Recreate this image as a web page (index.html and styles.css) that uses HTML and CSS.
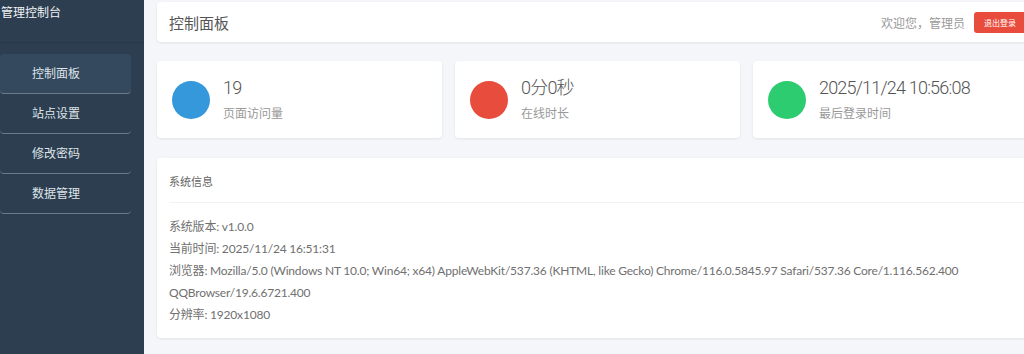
FILE: index.html
```html
<!DOCTYPE html>
<html lang="zh-CN">
<head>
    <meta charset="UTF-8">
    <title>管理控制台</title>
    <link rel="stylesheet" href="styles.css">
</head>
<body>
<div class="layout">
    <div class="sidebar">
        <div class="sidebar-title">管理控制台</div>
        <ul class="menu">
            <li class="menu-item active">控制面板</li>
            <li class="menu-item">站点设置</li>
            <li class="menu-item">修改密码</li>
            <li class="menu-item">数据管理</li>
        </ul>
    </div>
    <div class="main">
        <div class="header">
            <h1>控制面板</h1>
            <div class="user-info">
                <span>欢迎您，管理员</span>
                <button class="logout">退出登录</button>
            </div>
        </div>
        <div class="stats">
            <div class="stat-card">
                <div class="stat-icon blue"></div>
                <div class="stat-text">
                    <div class="stat-value">19</div>
                    <div class="stat-label">页面访问量</div>
                </div>
            </div>
            <div class="stat-card">
                <div class="stat-icon red"></div>
                <div class="stat-text">
                    <div class="stat-value">0分0秒</div>
                    <div class="stat-label">在线时长</div>
                </div>
            </div>
            <div class="stat-card">
                <div class="stat-icon green"></div>
                <div class="stat-text">
                    <div class="stat-value">2025/11/24 10:56:08</div>
                    <div class="stat-label">最后登录时间</div>
                </div>
            </div>
        </div>
        <div class="info-card">
            <h3>系统信息</h3>
            <div class="info-body">
                <p>系统版本: v1.0.0</p>
                <p>当前时间: 2025/11/24 16:51:31</p>
                <p>浏览器: Mozilla/5.0 (Windows NT 10.0; Win64; x64) AppleWebKit/537.36 (KHTML, like Gecko) Chrome/116.0.5845.97 Safari/537.36 Core/1.116.562.400 QQBrowser/19.6.6721.400</p>
                <p>分辨率: 1920x1080</p>
            </div>
        </div>
    </div>
</div>
</body>
</html>
```

FILE: styles.css
```css
body {
    margin: 0;
    padding: 0;
    background-color: #f5f6fa;
    font-family: "Lato", "Noto Sans CJK SC", sans-serif;
    overflow: hidden;
}
.layout {
    display: flex;
    min-height: 354px;
}
.sidebar {
    width: 144px;
    flex-shrink: 0;
    background-color: #2c3e50;
    color: #ecf0f1;
}
.sidebar-title {
    height: 38px;
    padding: 4px 0 0 1px;
    font-size: 12px;
    line-height: 18px;
    color: #f2f4f6;
    border-bottom: 1px solid #283848;
}
.menu {
    list-style: none;
    margin: 11px 0 0;
    padding: 0;
    width: 131px;
}
.menu-item {
    height: 39px;
    line-height: 40px;
    padding-left: 32px;
    font-size: 12px;
    color: #dfe4e8;
    border-bottom: 1px solid #6c7a88;
    border-radius: 4px;
}
.menu-item.active {
    background-color: #34495e;
}
.main {
    width: 881px;
    flex-shrink: 0;
    padding-left: 13px;
}
.header {
    margin-top: 2px;
    height: 40px;
    padding: 0 12px;
    background-color: #fff;
    border-radius: 4px;
    box-shadow: 0 1px 3px rgba(0, 0, 0, 0.08);
    display: flex;
    align-items: center;
    justify-content: space-between;
}
.header h1 {
    margin: 0;
    font-size: 15px;
    font-weight: normal;
    color: #555;
}
.user-info {
    display: flex;
    align-items: center;
    font-size: 12px;
    color: #999;
}
.logout {
    margin-left: 9px;
    height: 21px;
    padding: 0 10px;
    border: none;
    border-radius: 3px;
    background-color: #e74c3c;
    color: #fff;
    font-family: inherit;
    font-size: 8px;
}
.stats {
    display: grid;
    grid-template-columns: repeat(3, 285px);
    gap: 13px;
    margin-top: 19px;
}
.stat-card {
    height: 77px;
    padding: 0 15px;
    background-color: #fff;
    border-radius: 4px;
    box-shadow: 0 1px 3px rgba(0, 0, 0, 0.08);
    display: flex;
    align-items: center;
}
.stat-icon {
    width: 38px;
    height: 38px;
    border-radius: 50%;
    margin-right: 13px;
    flex-shrink: 0;
}
.stat-icon.blue { background-color: #3498db; }
.stat-icon.red { background-color: #e74c3c; }
.stat-icon.green { background-color: #2ecc71; }
.stat-value {
    font-family: "Roboto", "Noto Sans CJK SC", sans-serif;
    font-size: 18px;
    font-weight: 300;
    letter-spacing: -0.8px;
    line-height: 22px;
    color: #555;
}
.stat-label {
    margin-top: 6px;
    font-size: 12px;
    line-height: 18px;
    color: #999;
}
.info-card {
    margin-top: 20px;
    padding: 0 12px 12px;
    background-color: #fff;
    border-radius: 4px;
    box-shadow: 0 1px 3px rgba(0, 0, 0, 0.08);
}
.info-card h3 {
    margin: 0;
    padding: 14px 0 10px;
    font-size: 11px;
    font-weight: normal;
    line-height: 20px;
    color: #666;
    border-bottom: 1px solid #f2f2f2;
}
.info-body {
    padding-top: 13px;
}
.info-body p {
    margin: 0;
    font-size: 12px;
    letter-spacing: -0.2px;
    line-height: 22px;
    color: #707070;
}
```
